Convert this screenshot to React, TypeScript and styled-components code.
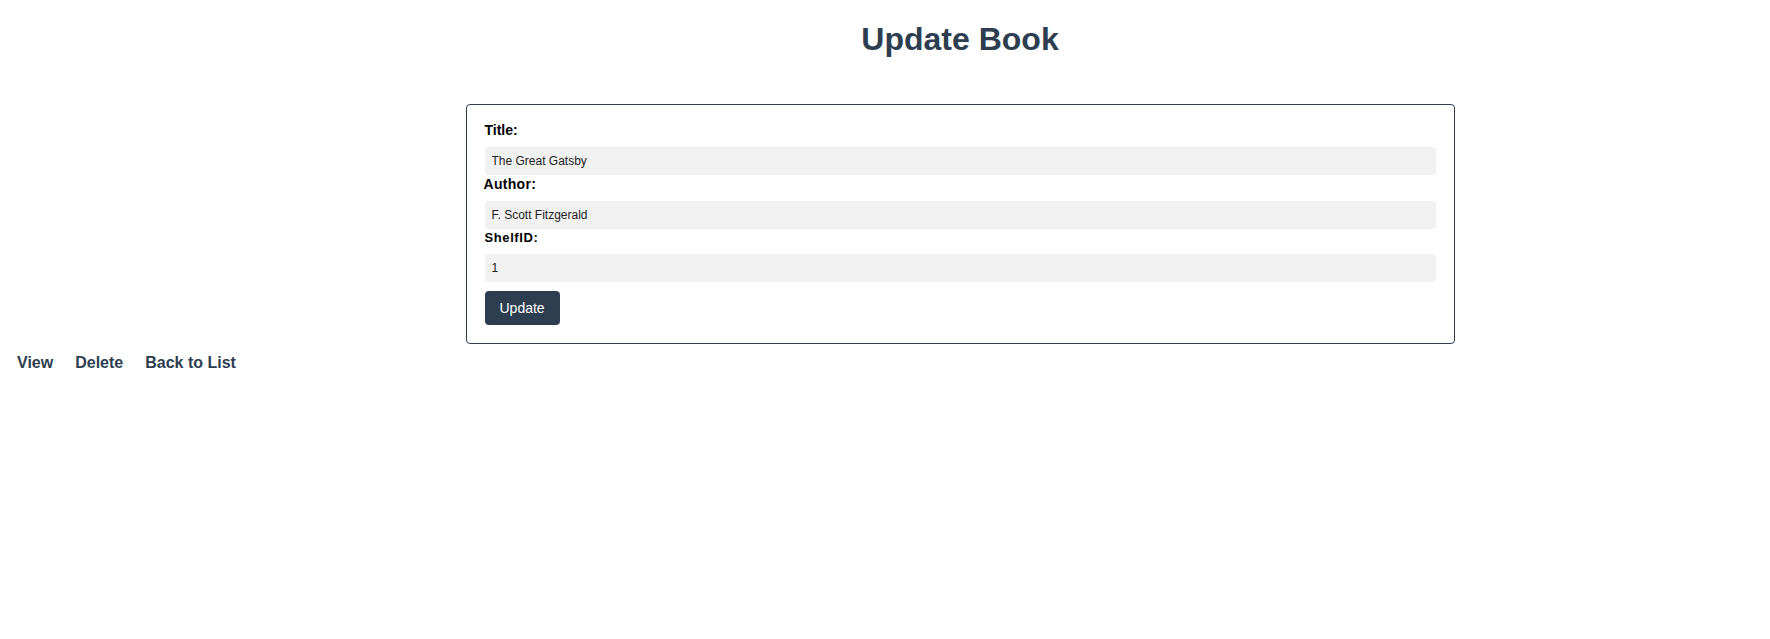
import React from "react";
import styled, { createGlobalStyle } from "styled-components";

const GlobalStyle = createGlobalStyle`
  html, body {
    margin: 0;
    padding: 0;
    background: #ffffff;
  }
  body {
    font-family: "Liberation Sans", Arial, sans-serif;
    color: #000;
  }
`;

const Page = styled.div`
  padding: 0 8px;
`;

const Main = styled.main`
  display: flex;
  flex-direction: column;
  align-items: center;
  padding-left: 150px;
`;

const Heading = styled.h1`
  margin: 21px 0 0;
  font-size: 32px;
  font-weight: 700;
  line-height: 37px;
  color: #2c3e50;
`;

const Card = styled.form`
  box-sizing: border-box;
  width: 989px;
  margin-top: 46px;
  padding: 18px;
  border: 1px solid #2c3e50;
  border-radius: 4px;
  display: flex;
  flex-direction: column;
`;

const Label = styled.label<{ $size?: number; $spacing?: number; $shift?: number }>`
  display: block;
  font-size: ${(p) => p.$size ?? 14}px;
  font-weight: 700;
  letter-spacing: ${(p) => p.$spacing ?? 0}px;
  line-height: 15px;
  margin-left: ${(p) => p.$shift ?? 0}px;
  margin-bottom: 9px;
  color: #000;
`;

const Input = styled.input`
  box-sizing: border-box;
  width: 100%;
  height: 28px;
  margin: 0 0 1.5px;
  padding: 0 7px;
  border: none;
  border-radius: 4px;
  background: #f1f1f1;
  font-family: "Liberation Sans", Arial, sans-serif;
  font-size: 12px;
  color: #222;
  outline: none;
`;

const Button = styled.button`
  align-self: flex-start;
  margin-top: 7.5px;
  padding: 0 15px;
  height: 34px;
  border: none;
  border-radius: 4px;
  background: #2c3e50;
  color: #ffffff;
  font-family: "Liberation Sans", Arial, sans-serif;
  font-size: 14px;
  cursor: pointer;
`;

const Nav = styled.nav`
  display: flex;
  gap: 22px;
  margin-top: 10px;
  padding-left: 9px;
`;

const NavLink = styled.a`
  font-size: 16px;
  font-weight: 700;
  line-height: 18px;
  color: #2c3e50;
  text-decoration: none;
`;

export default function App() {
  return (
    <>
      <GlobalStyle />
      <Page>
        <Main>
          <Heading>Update Book</Heading>
          <Card onSubmit={(e) => e.preventDefault()}>
            <Label htmlFor="title">Title:</Label>
            <Input id="title" defaultValue="The Great Gatsby" />
            <Label htmlFor="author" $spacing={0.3} $shift={-1}>Author:</Label>
            <Input id="author" defaultValue="F. Scott Fitzgerald" />
            <Label htmlFor="shelf" $size={13} $spacing={0.6}>ShelfID:</Label>
            <Input id="shelf" defaultValue="1" />
            <Button type="submit">Update</Button>
          </Card>
        </Main>
        <Nav>
          <NavLink href="#">View</NavLink>
          <NavLink href="#">Delete</NavLink>
          <NavLink href="#">Back to List</NavLink>
        </Nav>
      </Page>
    </>
  );
}
